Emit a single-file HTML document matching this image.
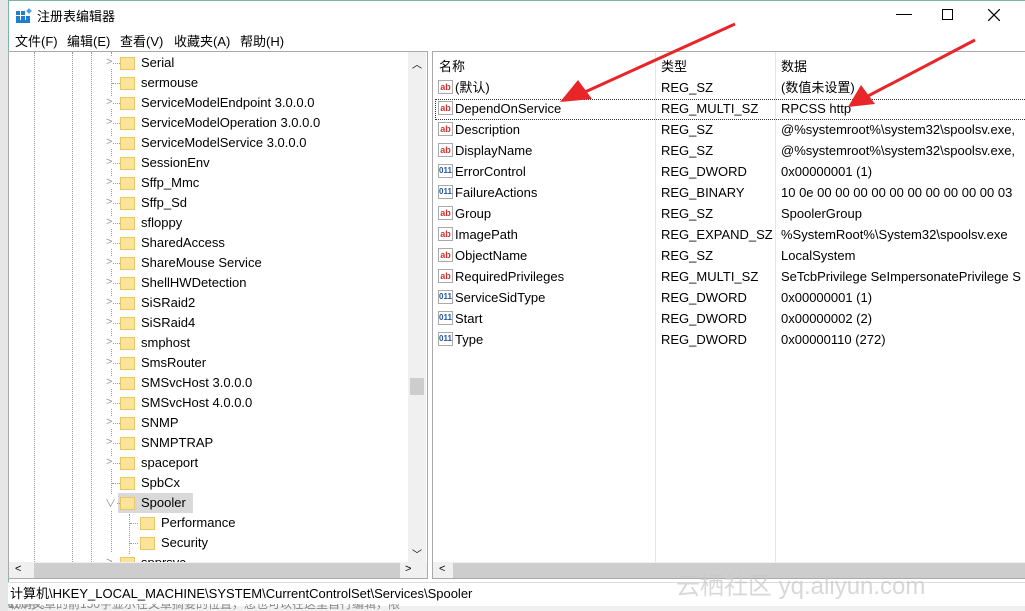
<!DOCTYPE html>
<html><head><meta charset="utf-8"><style>
*{margin:0;padding:0;box-sizing:border-box}
body{width:1025px;height:611px;overflow:hidden;background:#f0f0f0;font-family:"Liberation Sans","Noto Sans CJK SC",sans-serif;font-size:13px;color:#000;position:relative}
.abs{position:absolute}
.win{left:8px;top:0;width:1017px;height:606px;background:#fff;border-left:1px solid #7fb3a8;border-top:1px solid #7fb3a8}
.title{left:37px;top:6px;font-size:13px}
.menu{top:31px;font-size:13px}
.lp{left:8px;top:51px;width:420px;height:528px;border:1px solid #aaa;background:#fff;overflow:hidden}
.rp{left:432px;top:51px;width:593px;height:528px;border:1px solid #aaa;border-right:none;background:#fff;overflow:hidden}
.row{position:absolute;height:20px;line-height:20px;white-space:nowrap}
.fold{position:absolute;width:15px;height:13px;background:#fbe39a;border:1px solid #e7c863;top:4px}
.exp{position:absolute;color:#999;font-size:11px;background:#fff;padding:0 1px}
.vl{position:absolute;border-left:1px dotted #999;width:0}
.hl{position:absolute;border-top:1px dotted #999;height:0}
.ic{position:absolute;width:15px;height:14px;border:1px solid #aaa;font-size:9px;color:#c33;line-height:12px;text-align:center;background:#fff;font-weight:bold}
.ic.b{color:#2255aa;font-size:8px}
.r{position:absolute;height:21px;line-height:21px;white-space:nowrap}
</style></head><body>
<div class="abs" style="left:0;top:0;width:8px;height:611px;background:#e6e6e6"></div>
<div class="abs win"></div>
<svg class="abs" style="left:16px;top:8px" width="16" height="16"><rect x="0" y="3" width="4" height="4" fill="#1e7fd0"/><rect x="5" y="3" width="4" height="4" fill="#1e7fd0"/><rect x="0" y="8" width="4" height="4" fill="#1e7fd0"/><rect x="5" y="8" width="4" height="4" fill="#1e7fd0"/><rect x="10" y="8" width="4" height="4" fill="#1e7fd0"/><rect x="0" y="12" width="14" height="3" fill="#1e7fd0"/><rect x="11" y="1" width="4" height="4" fill="#4aa0e0" transform="rotate(45 13 3)"/></svg>
<div class="abs title">注册表编辑器</div>
<div class="abs" style="left:896px;top:14px;width:16px;border-top:1px solid #000"></div>
<div class="abs" style="left:942px;top:9px;width:11px;height:11px;border:1px solid #000"></div>
<svg class="abs" style="left:988px;top:9px" width="12" height="12"><path d="M0 0L12 12M12 0L0 12" stroke="#000" stroke-width="1.2"/></svg>
<div class="abs menu" style="left:15px">文件(F)</div>
<div class="abs menu" style="left:67px">编辑(E)</div>
<div class="abs menu" style="left:120px">查看(V)</div>
<div class="abs menu" style="left:174px">收藏夹(A)</div>
<div class="abs menu" style="left:240px">帮助(H)</div>

<div class="abs lp">
<div class="vl" style="left:25px;top:0;height:510px"></div>
<div class="vl" style="left:63px;top:0;height:510px"></div>
<div class="vl" style="left:82px;top:0;height:510px"></div>
<div class="vl" style="left:102px;top:0;height:500px"></div>
<div class="vl" style="left:120px;top:462px;height:40px"></div>
<div id="tree"></div>
<div class="abs" style="left:399px;top:0;width:18px;height:510px;background:#f0f0f0"></div>
<div class="abs" style="left:401px;top:326px;width:14px;height:17px;background:#cdcdcd"></div>
<div class="abs" style="left:403px;top:4px;font-size:10px">︿</div>
<div class="abs" style="left:403px;top:494px;font-size:10px">﹀</div>
<div class="abs" style="left:0;top:510px;width:418px;height:17px;background:#f0f0f0"></div>
<div class="abs" style="left:25px;top:511px;width:366px;height:15px;background:#cdcdcd"></div>
<div class="abs" style="left:6px;top:511px;font-size:11px">&lt;</div>
<div class="abs" style="left:396px;top:511px;font-size:11px">&gt;</div>
</div>

<div class="abs rp">
<div class="abs" style="left:222px;top:0;height:510px;border-left:1px solid #e5e5e5"></div>
<div class="abs" style="left:342px;top:0;height:510px;border-left:1px solid #e5e5e5"></div>
<div class="abs" style="left:6px;top:4px">名称</div>
<div class="abs" style="left:228px;top:4px">类型</div>
<div class="abs" style="left:348px;top:4px">数据</div>
<div class="abs" style="left:2px;top:47px;width:600px;height:21px;border:1px dotted #333"></div>
<div id="vals"></div>
<div class="abs" style="left:0;top:510px;width:593px;height:17px;background:#f0f0f0"></div>
<div class="abs" style="left:20px;top:511px;width:573px;height:15px;background:#cdcdcd"></div>
<div class="abs" style="left:6px;top:511px;font-size:11px">&lt;</div>
</div>

<div class="abs" style="left:8px;top:582px;width:1017px;height:22px;background:#fff;border-top:1px solid #ddd;line-height:22px;padding-left:2px">计算机\HKEY_LOCAL_MACHINE\SYSTEM\CurrentControlSet\Services\Spooler</div>
<div class="abs" style="left:8px;top:604px;width:400px;height:7px;overflow:hidden;color:#888;font-size:12px;line-height:0">取消文章的前150字显示在文章摘要的位置，您也可以在这里自行编辑，限150字。</div>
<div class="abs" style="left:676px;top:566px;font-size:24px;color:rgba(200,200,200,.7)">云栖社区 yq.aliyun.com</div>

<svg class="abs" style="left:0;top:0" width="1025" height="611">
<g fill="#e8262a" stroke="#e8262a">
<line x1="735" y1="24" x2="585" y2="92" stroke-width="3"/>
<polygon points="560,102 578,80 592,99" stroke="none"/>
<line x1="975" y1="40" x2="868" y2="96" stroke-width="3"/>
<polygon points="848,107 861,85 875,104" stroke="none"/>
</g></svg>

<script>
var t=[["Serial",1],["sermouse",0],["ServiceModelEndpoint 3.0.0.0",1],["ServiceModelOperation 3.0.0.0",1],["ServiceModelService 3.0.0.0",1],["SessionEnv",1],["Sffp_Mmc",1],["Sffp_Sd",1],["sfloppy",1],["SharedAccess",1],["ShareMouse Service",1],["ShellHWDetection",1],["SiSRaid2",1],["SiSRaid4",1],["smphost",1],["SmsRouter",1],["SMSvcHost 3.0.0.0",1],["SMSvcHost 4.0.0.0",1],["SNMP",1],["SNMPTRAP",1],["spaceport",1],["SpbCx",0],["Spooler",2],["Performance",3],["Security",3],["spprsvc",1]];
var h="";t.forEach(function(e,i){var y=i*20+1;var c=e[1]==3;var fx=c?131:111;
if(e[1]==2)h+='<div class="abs" style="left:109px;top:'+y+'px;width:75px;height:20px;background:#d9d9d9"></div>';
h+='<div class="hl" style="left:'+(c?121:103)+'px;top:'+(y+10)+'px;width:8px"></div>';
if(e[1]==1)h+='<div class="exp" style="left:96px;top:'+(y+3)+'px">&gt;</div>';
if(e[1]==2)h+='<div class="exp" style="left:95px;top:'+(y+2)+'px">∨</div>';
h+='<div class="fold" style="left:'+fx+'px;top:'+(y+4)+'px"></div>';
h+='<div class="row" style="left:'+(fx+21)+'px;top:'+y+'px">'+e[0]+'</div>';});
document.getElementById('tree').innerHTML=h;
var v=[["(默认)","REG_SZ","(数值未设置)",0],["DependOnService","REG_MULTI_SZ","RPCSS http",0],["Description","REG_SZ","@%systemroot%\\system32\\spoolsv.exe,",0],["DisplayName","REG_SZ","@%systemroot%\\system32\\spoolsv.exe,",0],["ErrorControl","REG_DWORD","0x00000001 (1)",1],["FailureActions","REG_BINARY","10 0e 00 00 00 00 00 00 00 00 00 00 03",1],["Group","REG_SZ","SpoolerGroup",0],["ImagePath","REG_EXPAND_SZ","%SystemRoot%\\System32\\spoolsv.exe",0],["ObjectName","REG_SZ","LocalSystem",0],["RequiredPrivileges","REG_MULTI_SZ","SeTcbPrivilege SeImpersonatePrivilege S",0],["ServiceSidType","REG_DWORD","0x00000001 (1)",1],["Start","REG_DWORD","0x00000002 (2)",1],["Type","REG_DWORD","0x00000110 (272)",1]];
h="";v.forEach(function(e,i){var y=25+i*21;
h+='<div class="ic'+(e[3]?' b':'')+'" style="left:5px;top:'+(y+3)+'px">'+(e[3]?'011':'ab')+'</div>';
h+='<div class="r" style="left:22px;top:'+y+'px">'+e[0]+'</div><div class="r" style="left:228px;top:'+y+'px">'+e[1]+'</div><div class="r" style="left:348px;top:'+y+'px">'+e[2]+'</div>';});
document.getElementById('vals').innerHTML=h;
</script>
</body></html>
